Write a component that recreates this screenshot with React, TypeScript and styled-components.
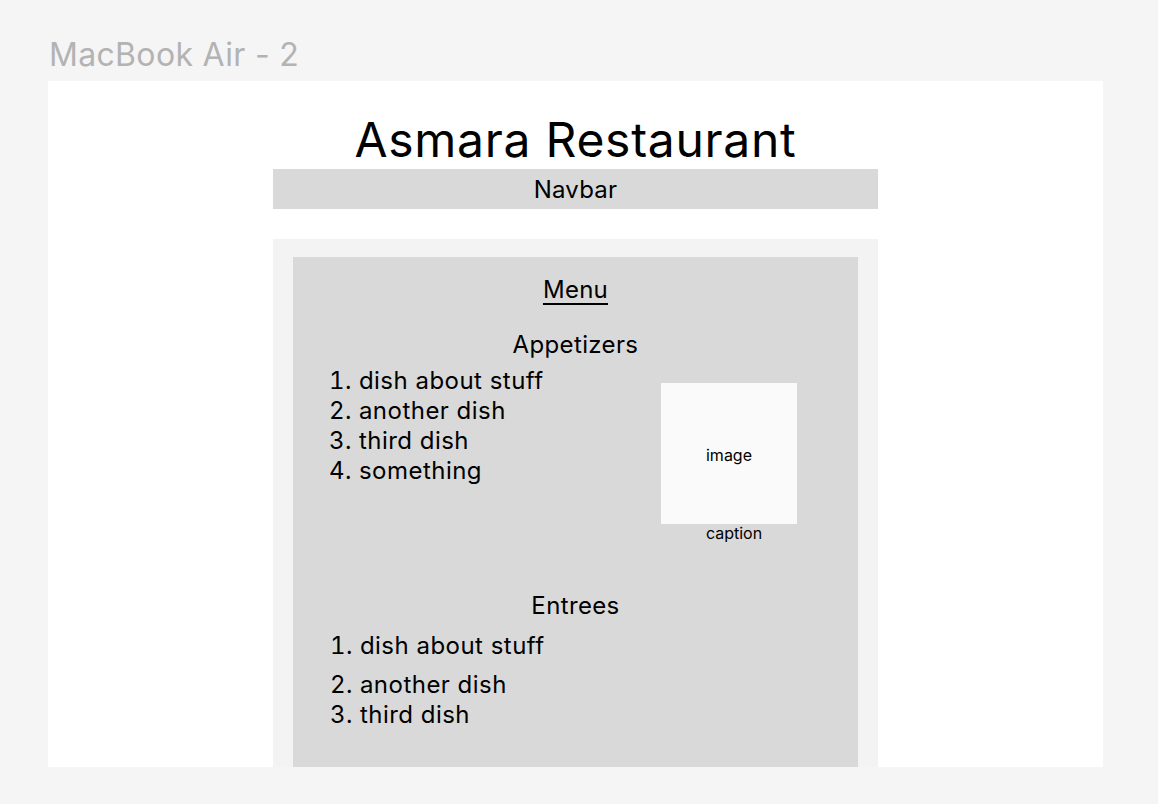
import React from "react";
import styled, { createGlobalStyle } from "styled-components";

const GlobalStyle = createGlobalStyle`
  html, body {
    margin: 0;
    padding: 0;
    background: #f5f5f5;
  }
  body {
    font-family: Inter, "Noto Sans", "Liberation Sans", sans-serif;
    color: #000;
    -webkit-font-smoothing: antialiased;
  }
  * { box-sizing: border-box; }
`;

const Canvas = styled.div`
  width: 1158px;
  height: 804px;
  padding-left: 48px;
  overflow: hidden;
`;

const FrameLabel = styled.div`
  height: 81px;
  padding: 36px 0 0 1px;
  font-size: 32px;
  line-height: 38px;
  letter-spacing: 0.01em;
  color: #b3b3b3;
  white-space: nowrap;
`;

const Frame = styled.div`
  width: 1055px;
  height: 686px;
  background: #ffffff;
  overflow: hidden;
  padding-top: 29px;
  display: flex;
  flex-direction: column;
  align-items: center;
`;

const Column = styled.div`
  width: 605px;
  display: flex;
  flex-direction: column;
  align-items: stretch;
`;

const Title = styled.h1`
  margin: 0;
  font-size: 48px;
  line-height: 59px;
  font-weight: 400;
  letter-spacing: 0.015em;
  text-align: center;
  white-space: nowrap;
`;

const Navbar = styled.nav`
  height: 40px;
  background: #d9d9d9;
  display: flex;
  align-items: center;
  justify-content: center;
  font-size: 24px;
  line-height: 29px;
  letter-spacing: 0.01em;
`;

const MainPanel = styled.main`
  margin-top: 30px;
  background: #f3f3f3;
  padding: 18px 20px 0;
`;

const MenuCard = styled.section`
  background: #d9d9d9;
  padding: 18px 0 80px;
  display: flex;
  flex-direction: column;
`;

const MenuHeading = styled.h2`
  margin: 0;
  font-size: 24px;
  line-height: 29px;
  font-weight: 400;
  letter-spacing: 0.01em;
  text-align: center;
  text-decoration: underline;
  text-decoration-thickness: 2px;
  text-underline-offset: 5px;
`;

const CategoryTitle = styled.h3<{ $top: number }>`
  margin: ${(p) => p.$top}px 0 0;
  font-size: 24px;
  line-height: 29px;
  font-weight: 400;
  letter-spacing: 0.015em;
  text-align: center;
`;

const CategoryBody = styled.div<{ $top: number; $indent: number }>`
  margin-top: ${(p) => p.$top}px;
  padding: 0 61px 0 ${(p) => p.$indent}px;
  display: flex;
  align-items: flex-start;
`;

const DishList = styled.ol`
  flex: 1;
  margin: 0;
  padding: 0;
  list-style: decimal inside;
  font-size: 24px;
  line-height: 30px;
  letter-spacing: 0.02em;
`;

const Dish = styled.li<{ $gap?: number }>`
  margin-top: ${(p) => p.$gap ?? 0}px;
  white-space: nowrap;
`;

const Figure = styled.figure`
  margin: 17px 0 0;
  width: 136px;
  display: flex;
  flex-direction: column;
`;

const ImageBox = styled.div`
  height: 141px;
  background: #fafafa;
  display: flex;
  align-items: center;
  justify-content: center;
  font-size: 16px;
  line-height: 19px;
  padding-top: 4px;
`;

const Caption = styled.figcaption`
  padding-left: 10px;
  text-align: center;
  font-size: 16px;
  line-height: 19px;
`;

export default function App() {
  return (
    <>
      <GlobalStyle />
      <Canvas>
        <FrameLabel>MacBook Air - 2</FrameLabel>
        <Frame>
          <Column>
            <Title>Asmara Restaurant</Title>
            <Navbar>Navbar</Navbar>
            <MainPanel>
              <MenuCard>
                <MenuHeading>Menu</MenuHeading>

                <CategoryTitle $top={26}>Appetizers</CategoryTitle>
                <CategoryBody $top={7} $indent={36}>
                  <DishList>
                    <Dish>dish about stuff</Dish>
                    <Dish>another dish</Dish>
                    <Dish>third dish</Dish>
                    <Dish>something</Dish>
                  </DishList>
                  <Figure>
                    <ImageBox>image</ImageBox>
                    <Caption>caption</Caption>
                  </Figure>
                </CategoryBody>

                <CategoryTitle $top={48}>Entrees</CategoryTitle>
                <CategoryBody $top={11} $indent={37}>
                  <DishList>
                    <Dish>dish about stuff</Dish>
                    <Dish $gap={9}>another dish</Dish>
                    <Dish>third dish</Dish>
                  </DishList>
                </CategoryBody>
              </MenuCard>
            </MainPanel>
          </Column>
        </Frame>
      </Canvas>
    </>
  );
}
